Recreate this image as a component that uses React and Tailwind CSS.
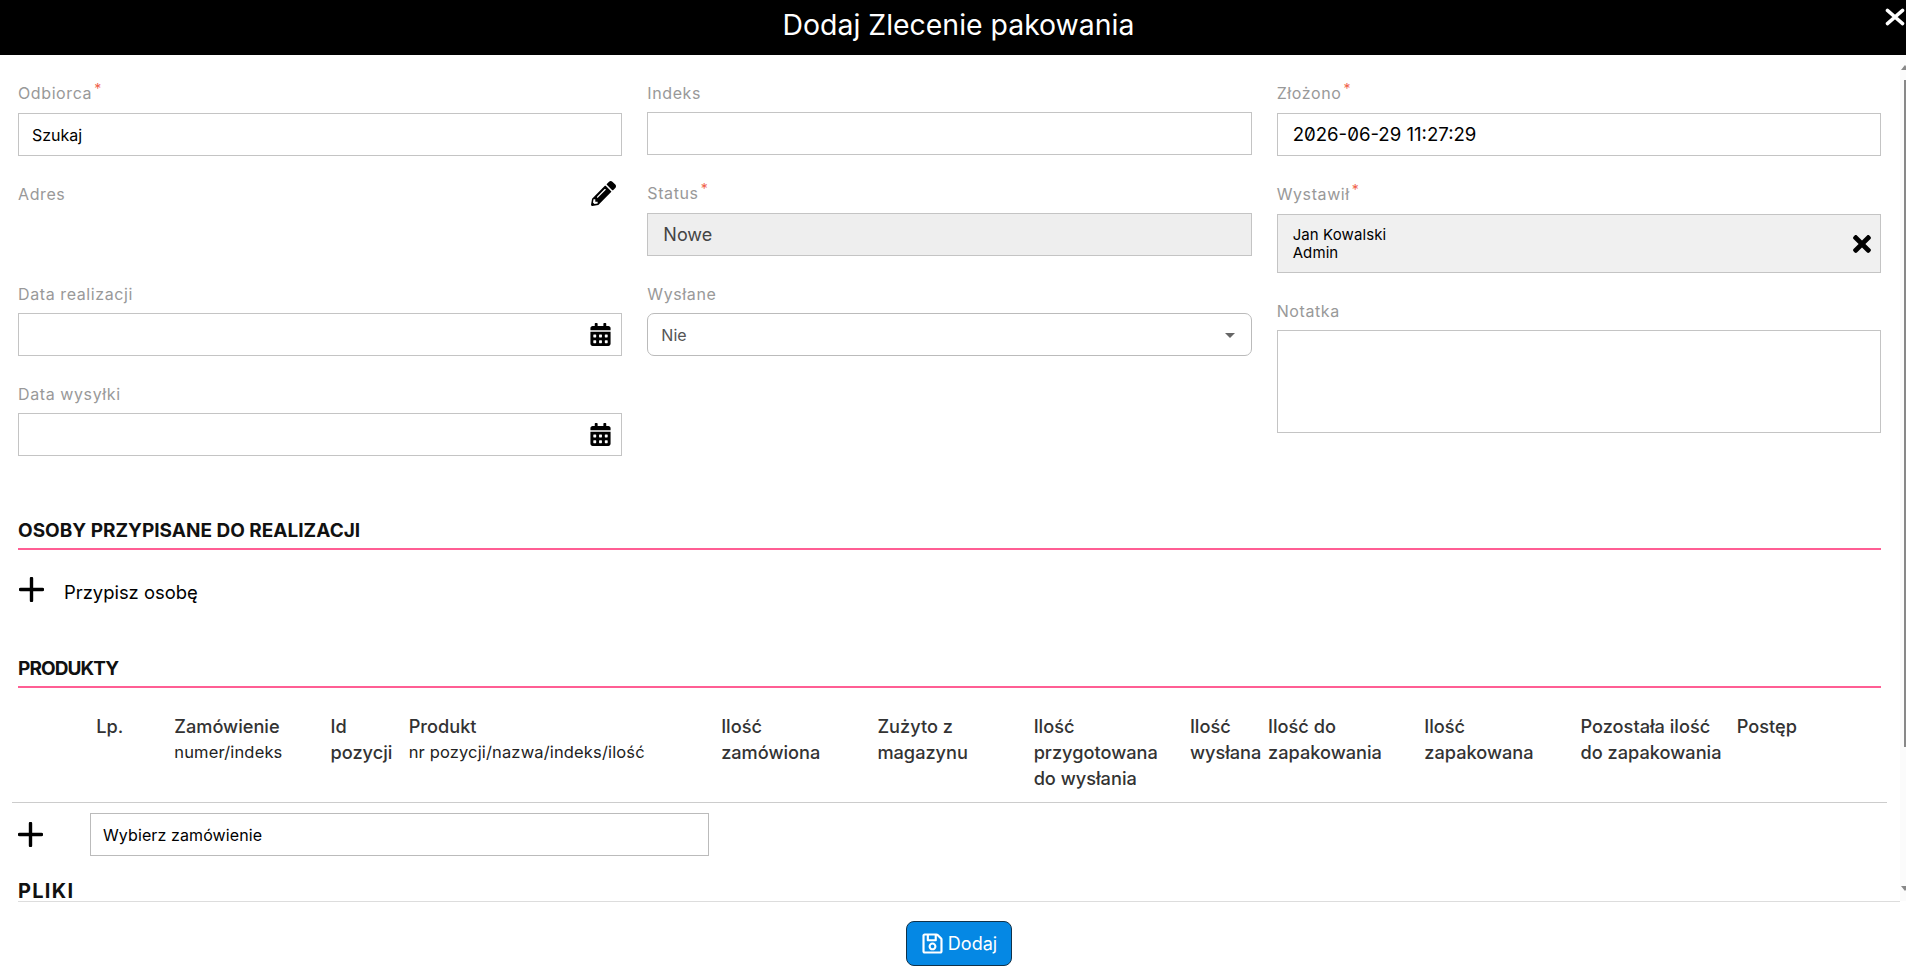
import React from 'react';
import { FaPencilAlt, FaCalendarAlt, FaTimes, FaRegSave } from 'react-icons/fa';

const Field = ({ label, required, className = '', labelClass = 'mb-2', labelPad = 'pt-[1px]', children, action }) => (
    <div className={`flex flex-col ${className}`}>
        <div className={`flex items-center justify-between h-6 ${labelClass}`}>
            <span className={`text-[16px] tracking-[0.6px] text-[#999] leading-6 ${labelPad}`}>
                {label}
                {required && <sup className="text-[#f0614a] text-[14px] ml-[2px] top-[-5px]">*</sup>}
            </span>
            {action}
        </div>
        {children}
    </div>
);

const box = 'h-[43px] border border-[#c4c4c4] bg-white flex items-center';

const DateField = ({ label }) => (
    <Field label={label}>
        <div className={`${box} justify-end pr-[10px]`}>
            <FaCalendarAlt className="text-black w-[21px] h-[23px]" />
        </div>
    </Field>
);

const SectionTitle = ({ children, className = '' }) => (
    <h2 className={`text-[19px] leading-6 font-bold text-[#111] border-b-2 border-[#ff5e94] ${className}`}>{children}</h2>
);

const PlusIcon = ({ className = '' }) => (
    <svg viewBox="0 0 25 25" className={`w-[25px] h-[25px] text-black ${className}`} fill="none" stroke="currentColor" strokeWidth="3.4" strokeLinecap="round">
        <path d="M12.5 1.5v22M1.5 12.5h22" />
    </svg>
);

const columns = [
    { span: 'col-span-1', lines: [] },
    { span: 'col-span-1', lines: ['Lp.'] },
    { span: 'col-span-2', lines: ['Zamówienie'], sub: 'numer/indeks' },
    { span: 'col-span-1', lines: ['Id', 'pozycji'] },
    { span: 'col-span-4', lines: ['Produkt'], sub: 'nr pozycji/nazwa/indeks/ilość' },
    { span: 'col-span-2', lines: ['Ilość', 'zamówiona'] },
    { span: 'col-span-2', lines: ['Zużyto z', 'magazynu'] },
    { span: 'col-span-2', lines: ['Ilość', 'przygotowana', 'do wysłania'] },
    { span: 'col-span-1', lines: ['Ilość', 'wysłana'] },
    { span: 'col-span-2', lines: ['Ilość do', 'zapakowania'] },
    { span: 'col-span-2', lines: ['Ilość', 'zapakowana'] },
    { span: 'col-span-2', lines: ['Pozostała ilość', 'do zapakowania'] },
    { span: 'col-span-2', lines: ['Postęp'] },
];

const App = () => {
    return (
        <div className="relative h-[971px] w-[1906px] overflow-hidden bg-white font-['Inter',sans-serif] text-black">
            {/* Modal header */}
            <header className="relative h-[55px] bg-black flex items-center justify-center pb-[5px] pl-[11px]">
                <h1 className="text-[28.4px] text-white font-normal leading-none">Dodaj Zlecenie pakowania</h1>
                <svg viewBox="0 0 21 19" className="absolute right-[1px] top-[8px] w-[20px] h-[18px] text-white" fill="none" stroke="currentColor" strokeWidth="3.6" strokeLinecap="round">
                    <path d="M2.5 2.5l16 14M18.5 2.5l-16 14" />
                </svg>
            </header>

            {/* Form body */}
            <main className="h-[846px] pt-[26px] pl-[18px] pr-[25px]">
                <div className="grid grid-cols-3 gap-x-[25px]">
                    <div className="flex flex-col gap-[25px]">
                        <Field label="Odbiorca" required labelPad="">
                            <div className={`${box} px-[13px] text-[16px] pt-[1px]`}>Szukaj</div>
                        </Field>
                        <Field label="Adres" className="h-[75px]" action={<FaPencilAlt className="w-[25px] h-[25px] text-black mr-[6px]" />} />
                        <DateField label="Data realizacji" />
                        <DateField label="Data wysyłki" />
                    </div>

                    <div className="flex flex-col gap-[25px]">
                        <Field label="Indeks" labelPad="" labelClass="mb-[7px]" className="mb-[1px]">
                            <input className={box} />
                        </Field>
                        <Field label="Status" required labelPad="">
                            <div className="h-[43px] border border-[#c4c4c4] bg-[#eee] flex items-center pl-[15px] pr-4 text-[18px] text-[#444]">Nowe</div>
                        </Field>
                        <Field label="Wysłane">
                            <div className="h-[43px] border border-[#bbb] rounded-[7px] flex items-center justify-between pl-[13px] pr-[16px] pt-[1px] text-[16px] text-[#555]">
                                Nie
                                <span className="w-0 h-0 border-x-[5px] border-x-transparent border-t-[5px] border-t-[#666]" />
                            </div>
                        </Field>
                    </div>

                    <div className="flex flex-col">
                        <Field label="Złożono" required labelPad="" className="mb-[25px]">
                            <div className={`${box} px-[15px] text-[18.6px] slashed-zero`}>2026-06-29 11:27:29</div>
                        </Field>
                        <Field label="Wystawił" required labelClass="mb-[9px]" className="mb-[25px]">
                            <div className="h-[59px] border border-[#c4c4c4] bg-[#f0f0f0] flex items-center justify-between pl-[15px] pr-[5px]">
                                <div className="text-[15px] tracking-[0.1px] leading-[18px]">
                                    Jan Kowalski
                                    <br />
                                    Admin
                                </div>
                                <FaTimes className="w-[26px] h-[26px] text-black" />
                            </div>
                        </Field>
                        <Field label="Notatka">
                            <textarea className="h-[103px] border border-[#c4c4c4] resize-none" />
                        </Field>
                    </div>
                </div>

                {/* Assigned people */}
                <SectionTitle className="mt-[63px] pb-[5px]">OSOBY PRZYPISANE DO REALIZACJI</SectionTitle>
                <div className="flex items-center mt-[25px] pl-[1px]">
                    <PlusIcon />
                    <span className="ml-[20px] text-[18.4px] leading-6 mt-[5px]">Przypisz osobę</span>
                </div>

                {/* Products */}
                <SectionTitle className="mt-[53px] pb-[5px] tracking-[-0.9px]">PRODUKTY</SectionTitle>
                <div className="-mx-[6px] mt-[25px]">
                    <div className="grid grid-cols-[repeat(24,minmax(0,1fr))] border-b border-[#ccc] pb-[11px]">
                        {columns.map((col, i) => (
                            <div key={i} className={`${col.span} px-[6px] text-[18.2px] leading-[26px] font-medium text-[#333] whitespace-nowrap`}>
                                {col.lines.map((line) => (
                                    <div key={line}>{line}</div>
                                ))}
                                {col.sub && <div className="text-[16.5px] tracking-[0.15px] font-normal text-[#222]">{col.sub}</div>}
                            </div>
                        ))}
                    </div>
                    <div className="flex items-center mt-[10px]">
                        <div className="w-[78px] pl-[6px]">
                            <PlusIcon />
                        </div>
                        <div className="w-[619px] h-[43px] border border-[#bbb] flex items-center px-3 text-[16px] tracking-[0.1px]">Wybierz zamówienie</div>
                    </div>
                </div>
                <h2 className="mt-[26px] text-[20px] leading-[18px] tracking-[1.3px] font-bold text-[#111]">PLIKI</h2>
            </main>

            {/* Scrollbar */}
            <div className="absolute left-[1900px] top-[55px] h-[846px] w-[6px] bg-[#fbfbfb]">
                <span className="absolute left-[1px] top-[10px] w-0 h-0 border-x-[4px] border-x-transparent border-b-[5px] border-b-[#888]" />
                <div className="absolute left-[4px] top-[25px] h-[667px] w-[2px] bg-[#888]" />
                <span className="absolute left-[1px] top-[831px] w-0 h-0 border-x-[4px] border-x-transparent border-t-[5px] border-t-[#888]" />
            </div>

            {/* Footer */}
            <footer className="ml-[18px] mr-[6px] h-[70px] border-t border-[#ddd] flex items-start justify-center pt-[19px]">
                <button className="h-[45px] w-[106px] rounded-[8px] border border-[#10324a] bg-[#0588e4] text-white flex items-center justify-center gap-[4px] text-[18px]">
                    <FaRegSave className="w-[23px] h-[23px]" />
                    Dodaj
                </button>
            </footer>
        </div>
    );
};

export default App;
